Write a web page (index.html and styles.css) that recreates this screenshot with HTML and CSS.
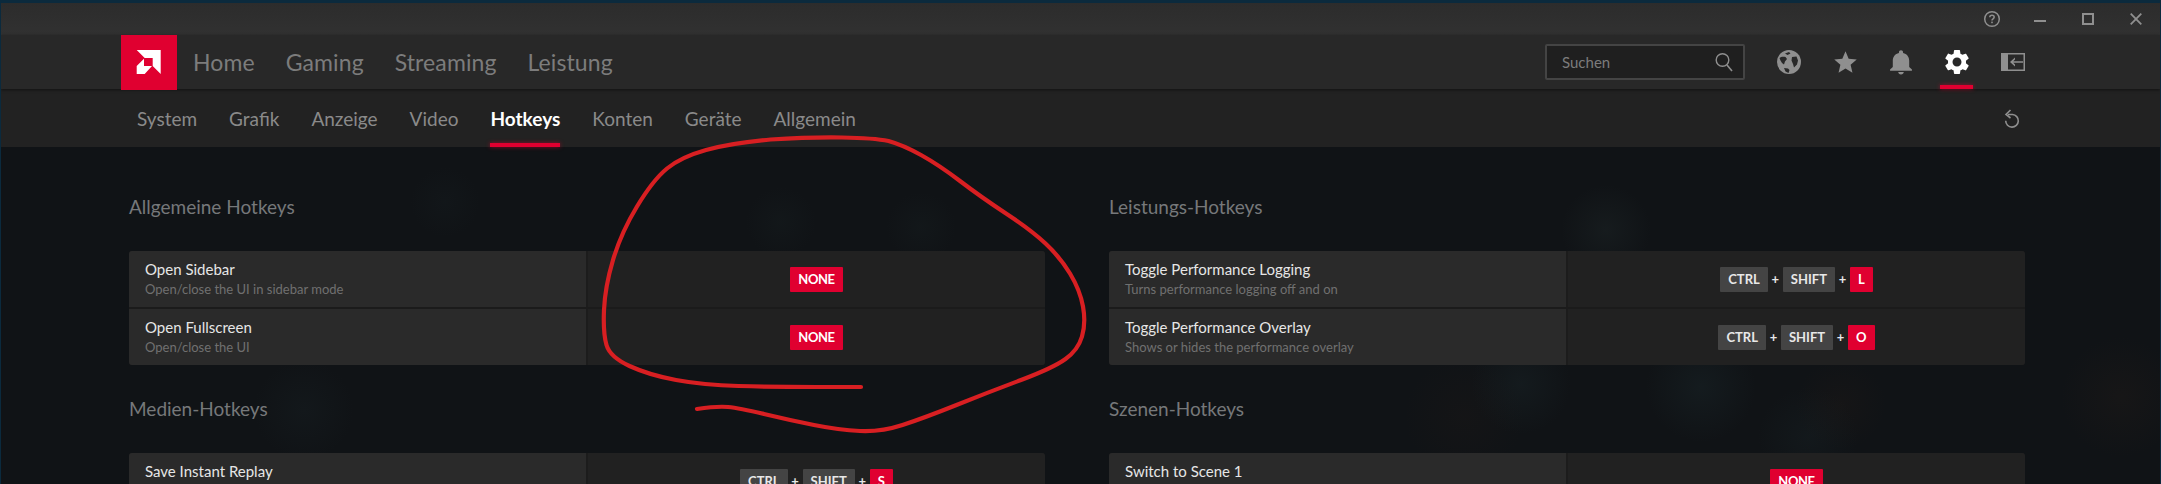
FILE: index.html
```html
<!DOCTYPE html>
<html lang="en">
<head>
    <meta charset="UTF-8">
    <meta name="viewport" content="width=device-width, initial-scale=1.0">
    <title>Radeon Settings - Hotkeys</title>
    <link rel="stylesheet" href="styles.css">
</head>
<body>
<div class="window">

  <!-- Title bar -->
  <div class="titlebar">
    <span class="win-btn">
      <svg width="18" height="18" viewBox="0 0 18 18"><circle cx="9" cy="9" r="7.3" fill="none" stroke="#8f8f8f" stroke-width="1.5"/><path d="M6.8 7.2c0-1.3 1-2 2.2-2s2.200.8 2.200 1.900c0 1.700-2.200 1.700-2.200 3.400" fill="none" stroke="#8f8f8f" stroke-width="1.500"/><rect x="8.200" y="11.600" width="1.600" height="1.600" fill="#8f8f8f"/></svg>
    </span>
    <span class="win-btn">
      <svg width="12" height="12" viewBox="0 0 12 12"><rect x="0" y="7" width="12" height="2" fill="#8f8f8f"/></svg>
    </span>
    <span class="win-btn">
      <svg width="12" height="12" viewBox="0 0 12 12"><rect x="1" y="1" width="10" height="10" fill="none" stroke="#8f8f8f" stroke-width="2"/></svg>
    </span>
    <span class="win-btn">
      <svg width="12" height="12" viewBox="0 0 12 12"><path d="M.7.7l10.600 10.600M11.300.7L.7 11.300" stroke="#8f8f8f" stroke-width="1.800"/></svg>
    </span>
  </div>

  <!-- Main navigation -->
  <div class="mainnav">
    <div class="logo">
      <svg width="56" height="55" viewBox="0 0 56 55"><path fill="#fff" d="M15.700 15h24v24l-8-8v-8h-8z"/><path fill="#fff" d="M15.700 31l7.300-7.300V31h8l-7.300 8h-8z"/></svg>
    </div>
    <a class="main-link">Home</a>
    <a class="main-link">Gaming</a>
    <a class="main-link">Streaming</a>
    <a class="main-link">Leistung</a>
    <div class="search">
      <span>Suchen</span>
      <svg width="18" height="20" viewBox="0 0 18 20"><circle cx="7.500" cy="8" r="6.300" fill="none" stroke="#8f8f8f" stroke-width="1.400"/><path d="M12 13l5 6" stroke="#8f8f8f" stroke-width="1.600"/></svg>
    </div>
    <span class="nav-icon">
      <svg width="26" height="26" viewBox="0 0 26 26"><circle cx="13" cy="13" r="12" fill="#8f8f8f"/><path fill="#282828" d="M3.500 9c1.500-1.500 4-1.500 6-1l1.500 2-2 2.500-1 3-2-1.500-1.500-2.500zM9 4.500l4-1.500 1.500 1.500-3 1.500zM16 8l4.500-.5 1.500 4-1 4-3 3-1-3.500-1.500-3.500zM8 19l4 .5 1.500 1.500-1 3-3-1.500z"/></svg>
    </span>
    <span class="nav-icon">
      <svg width="27" height="27" viewBox="0 0 24 24"><path fill="#8f8f8f" d="M12 17.270L18.180 21l-1.640-7.030L22 9.240l-7.190-.61L12 2 9.190 8.630 2 9.240l5.460 4.730L5.820 21z"/></svg>
    </span>
    <span class="nav-icon">
      <svg width="26" height="26" viewBox="2.500 1.500 19 21" preserveAspectRatio="none"><path fill="#8f8f8f" d="M12 22c1.100 0 2-.9 2-2h-4c0 1.100.89 2 2 2zm6-6v-5c0-3.070-1.640-5.640-4.500-6.320V4c0-.83-.67-1.500-1.500-1.500s-1.500.67-1.500 1.500v.68C7.630 5.360 6 7.920 6 11v5l-2 2v1h16v-1l-2-2z"/></svg>
    </span>
    <span class="nav-icon active">
      <svg width="30" height="30" viewBox="0 0 24 24"><path fill="#fff" d="M19.140 12.940c.04-.3.06-.61.06-.94 0-.32-.02-.64-.07-.94l2.030-1.580c.18-.14.23-.41.12-.61l-1.920-3.320c-.12-.22-.37-.29-.59-.22l-2.390.96c-.5-.38-1.030-.7-1.620-.94l-.36-2.540c-.04-.24-.24-.41-.48-.41h-3.840c-.24 0-.43.17-.47.41l-.36 2.540c-.59.24-1.130.57-1.620.94l-2.390-.96c-.22-.08-.47 0-.59.22L2.740 8.870c-.12.21-.08.47.12.61l2.030 1.580c-.05.3-.09.63-.09.94s.02.64.07.94l-2.030 1.580c-.18.14-.23.41-.12.61l1.920 3.320c.12.22.37.29.59.22l2.390-.96c.5.38 1.030.7 1.620.94l.36 2.540c.05.24.24.41.48.41h3.840c.24 0 .44-.17.47-.41l.36-2.540c.59-.24 1.130-.56 1.620-.94l2.390.96c.22.08.47 0 .59-.22l1.920-3.320c.12-.22.07-.47-.12-.61l-2.010-1.580zM12 15.600c-1.980 0-3.600-1.620-3.600-3.600s1.620-3.600 3.600-3.600 3.600 1.620 3.600 3.600-1.620 3.600-3.600 3.600z"/></svg>
    </span>
    <span class="nav-icon">
      <svg width="24" height="18" viewBox="0 0 24 18"><path fill="#8f8f8f" d="M0 0h24v18H0z"/><path fill="#282828" d="M7 1.500h15.500v15H7z"/><path d="M22 8.200H11v1.600h11zM14 4.500L9 9l5 4.500V11.500L11.500 9 14 6.500z" fill="#8f8f8f"/></svg>
    </span>
  </div>

  <!-- Sub navigation -->
  <div class="subnav">
    <a class="sub-link">System</a>
    <a class="sub-link">Grafik</a>
    <a class="sub-link">Anzeige</a>
    <a class="sub-link">Video</a>
    <a class="sub-link active">Hotkeys</a>
    <a class="sub-link">Konten</a>
    <a class="sub-link">Geräte</a>
    <a class="sub-link">Allgemein</a>
    <span class="reset">
      <svg width="16" height="19" viewBox="0 0 16 19"><path d="M4 5.500h4.500a6.300 6.300 0 1 1-6.800 6.300" fill="none" stroke="#8f8f8f" stroke-width="1.600"/><path d="M6.500 1L2 5.500 6.500 9" fill="none" stroke="#8f8f8f" stroke-width="1.600"/></svg>
    </span>
  </div>

  <!-- Hotkey groups -->
  <div class="content">
    <div class="group">
      <h2>Allgemeine Hotkeys</h2>
      <div class="panel">
        <div class="row">
          <div class="info"><div class="name">Open Sidebar</div><div class="desc">Open/close the UI in sidebar mode</div></div>
          <div class="keys"><span class="key red none">NONE</span></div>
        </div>
        <div class="row">
          <div class="info"><div class="name">Open Fullscreen</div><div class="desc">Open/close the UI</div></div>
          <div class="keys"><span class="key red none">NONE</span></div>
        </div>
      </div>
    </div>
    <div class="group">
      <h2>Leistungs-Hotkeys</h2>
      <div class="panel">
        <div class="row">
          <div class="info"><div class="name">Toggle Performance Logging</div><div class="desc">Turns performance logging off and on</div></div>
          <div class="keys"><span class="key">CTRL</span><span class="plus">+</span><span class="key">SHIFT</span><span class="plus">+</span><span class="key red">L</span></div>
        </div>
        <div class="row">
          <div class="info"><div class="name">Toggle Performance Overlay</div><div class="desc">Shows or hides the performance overlay</div></div>
          <div class="keys"><span class="key">CTRL</span><span class="plus">+</span><span class="key">SHIFT</span><span class="plus">+</span><span class="key red">O</span></div>
        </div>
      </div>
    </div>
    <div class="group">
      <h2>Medien-Hotkeys</h2>
      <div class="panel">
        <div class="row">
          <div class="info"><div class="name">Save Instant Replay</div></div>
          <div class="keys"><span class="key">CTRL</span><span class="plus">+</span><span class="key">SHIFT</span><span class="plus">+</span><span class="key red">S</span></div>
        </div>
      </div>
    </div>
    <div class="group">
      <h2>Szenen-Hotkeys</h2>
      <div class="panel">
        <div class="row">
          <div class="info"><div class="name">Switch to Scene 1</div></div>
          <div class="keys"><span class="key red none">NONE</span></div>
        </div>
      </div>
    </div>
  </div>
</div>

<!-- Red pen scribble on top of the screenshot -->
<svg class="scribble" width="2161" height="484" viewBox="0 0 2161 484"><path d="M861 387L817 387Q774 387 738.500 386Q703 385 676 380Q649 375 629.500 366Q610 357 606.500 345Q603 333 604 310Q605 287 613 260Q621 233 637 206.500Q653 180 667 168.500Q681 157 706 150Q731 143 770.500 139.500Q810 137 842 137.500Q874 138 888.500 141Q903 145 921 155Q939 165 960 181Q981 197 1006 213.500Q1031 230 1045.500 243.500Q1060 257 1070 273.500Q1080 290 1083 306.500Q1086 323 1082 336.500Q1078 350 1065.500 359Q1053 368 1021 380Q989 392 956.500 405Q924 418 902.500 425Q881 432 860 431Q839 430 814 425Q789 420 764 414Q739 408 728 407Q717 406 697 409" fill="none" stroke="#d81f22" stroke-width="4.200" stroke-linecap="round"/></svg>

</body>
</html>
```

FILE: styles.css
```css
html, body {
    margin: 0;
    height: 484px;
    overflow: hidden;
}
body {
    font-family: Lato, "Liberation Sans", sans-serif;
    background-color: #0b2a3d;
    padding: 3px 0 0 1px;
    box-sizing: border-box;
}
.window {
    width: 2159px;
    height: 481px;
    overflow: hidden;
    background-color: #101316;
}
.titlebar {
    height: 32px;
    display: flex;
    justify-content: flex-end;
    align-items: center;
    background: linear-gradient(#2c2c2c, #313131);
}
.win-btn {
    width: 48px;
    display: flex;
    justify-content: center;
    align-items: center;
}
.mainnav {
    height: 54px;
    display: flex;
    align-items: center;
    padding: 0 119px 0 120px;
    background-color: #282828;
    box-shadow: 0 1px 3px rgba(0, 0, 0, 0.5);
    position: relative;
    z-index: 1;
}
.logo {
    width: 56px;
    height: 55px;
    align-self: flex-start;
    background-color: #e00030;
    margin-right: 16px;
}
.logo svg {
    display: block;
}
.main-link {
    font-size: 23px;
    color: #7c7c7c;
    margin-right: 31px;
    letter-spacing: 0.1px;
}
.search {
    margin-left: auto;
    margin-right: 16px;
    width: 200px;
    height: 36px;
    box-sizing: border-box;
    display: flex;
    justify-content: space-between;
    align-items: center;
    padding: 0 10px 0 15px;
    background-color: #1f1f1f;
    border: 2px solid #444;
    border-radius: 2px;
    color: #7c7c7c;
    font-size: 15px;
}
.nav-icon {
    width: 56px;
    height: 54px;
    display: flex;
    justify-content: center;
    align-items: center;
    position: relative;
}
.nav-icon.active::after {
    content: "";
    position: absolute;
    left: 11px;
    bottom: 0;
    width: 33px;
    height: 4px;
    background-color: #e00030;
    box-shadow: 0 0 4px rgba(224, 0, 48, 0.6);
}
.subnav {
    height: 58px;
    display: flex;
    align-items: center;
    padding-left: 136px;
    background-color: #222;
    color: #8a8a8a;
}
.sub-link {
    font-size: 19px;
    margin-right: 32px;
    position: relative;
}
.sub-link.active {
    color: #fff;
    font-weight: 700;
}
.sub-link.active::after {
    content: "";
    position: absolute;
    left: 0;
    right: 0;
    bottom: -17px;
    height: 4px;
    background-color: #e00030;
    box-shadow: 0 0 4px rgba(224, 0, 48, 0.6);
}
.reset {
    margin-left: auto;
    margin-right: 140px;
    display: flex;
}
.content {
    height: 334px;
    padding: 16px 0 0 128px;
    display: grid;
    grid-template-columns: 916px 916px;
    grid-auto-rows: 202px;
    column-gap: 64px;
    background-color: #101316;
    background-image:
        radial-gradient(circle at 780px 75px, rgba(40, 60, 60, 0.1), transparent 35px),
        radial-gradient(circle at 920px 80px, rgba(40, 60, 60, 0.1), transparent 35px),
        radial-gradient(circle at 1605px 83px, rgba(50, 65, 65, 0.18), transparent 45px),
        radial-gradient(circle at 1520px 237px, rgba(40, 65, 70, 0.16), transparent 50px),
        radial-gradient(circle at 1700px 240px, rgba(40, 65, 70, 0.18), transparent 55px),
        radial-gradient(circle at 1463px 270px, rgba(70, 40, 25, 0.08), transparent 60px),
        radial-gradient(circle at 1840px 257px, rgba(70, 40, 25, 0.1), transparent 45px),
        radial-gradient(circle at 1807px 290px, rgba(40, 65, 70, 0.12), transparent 50px),
        radial-gradient(circle at 2120px 250px, rgba(70, 45, 30, 0.12), transparent 60px),
        radial-gradient(circle at 303px 263px, rgba(40, 60, 65, 0.12), transparent 50px),
        radial-gradient(circle at 444px 55px, rgba(40, 60, 65, 0.08), transparent 35px);
}
h2 {
    margin: 0;
    height: 88px;
    line-height: 88px;
    font-size: 19px;
    font-weight: 400;
    color: #76787a;
}
.panel {
    border-radius: 3px;
    overflow: hidden;
    background-color: #1b1b1b;
}
.row {
    height: 56px;
    display: grid;
    grid-template-columns: 459px 1fr;
}
.row + .row {
    margin-top: 2px;
}
.info {
    padding: 9px 0 0 16px;
    background-color: #2a2a2a;
    border-right: 2px solid #1c1c1c;
    box-sizing: border-box;
}
.name {
    font-size: 15px;
    line-height: 19px;
    color: #e6e6e6;
}
.desc {
    margin-top: 2px;
    font-size: 13px;
    line-height: 17px;
    color: #707070;
}
.keys {
    background-color: #212121;
    display: flex;
    justify-content: center;
    align-items: center;
}
.key {
    height: 25px;
    line-height: 25px;
    padding: 0 8px;
    font-size: 13px;
    font-weight: 700;
    color: #e8e8e8;
    background-color: #444;
    border-radius: 1px;
}
.key.red {
    background-color: #e00030;
    color: #fff;
}
.key.none {
    letter-spacing: -0.4px;
}
.plus {
    width: 15px;
    text-align: center;
    font-size: 13px;
    font-weight: 700;
    color: #e8e8e8;
}
.scribble {
    position: absolute;
    left: 0;
    top: 0;
    pointer-events: none;
}
```
